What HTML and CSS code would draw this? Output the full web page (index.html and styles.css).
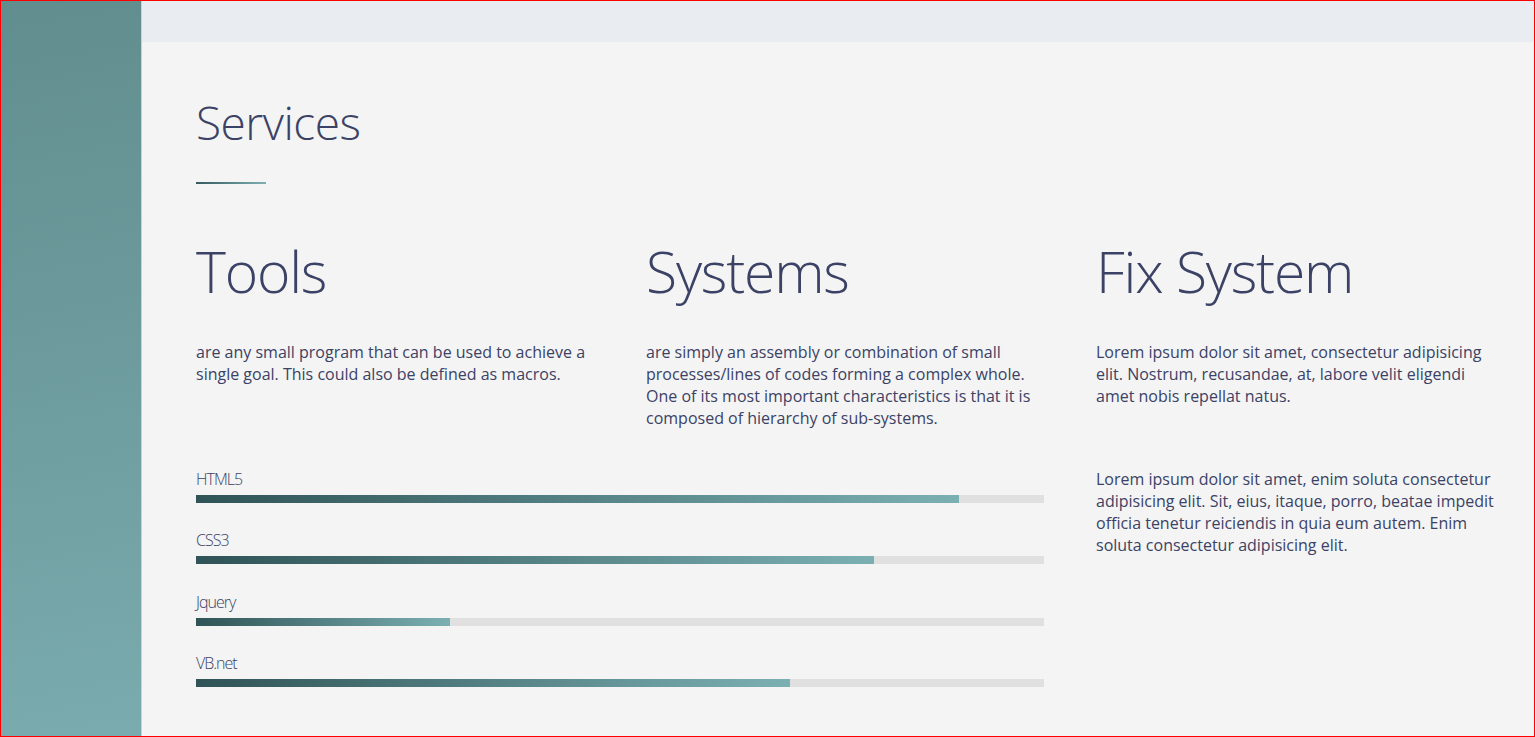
FILE: index.html
```html
<!DOCTYPE html>
<html lang="en">
<head>
<meta charset="utf-8">
<title>Services</title>
<link rel="stylesheet" href="styles.css">
</head>
<body>
<div class="page">
  <aside class="sidebar"></aside>
  <main class="main">
    <div class="topbar"></div>
    <section class="content">
      <h1 class="title">Services</h1>
      <div class="rule"></div>
      <div class="grid">
        <div class="col">
          <h2 class="col-title">Tools</h2>
          <p class="text">are any small program that can be used to achieve a single goal. This could also be defined as macros.</p>
        </div>
        <div class="col">
          <h2 class="col-title">Systems</h2>
          <p class="text">are simply an assembly or combination of small processes/lines of codes forming a complex whole. One of its most important characteristics is that it is composed of hierarchy of sub-systems.</p>
        </div>
        <div class="col">
          <h2 class="col-title">Fix System</h2>
          <p class="text">Lorem ipsum dolor sit amet, consectetur adipisicing elit. Nostrum, recusandae, at, labore velit eligendi amet nobis repellat natus.</p>
        </div>
        <div class="skills">
          <div class="skill">
            <div class="skill-label">HTML5</div>
            <div class="track"><div class="fill" style="width:90%"></div></div>
          </div>
          <div class="skill">
            <div class="skill-label">CSS3</div>
            <div class="track"><div class="fill" style="width:80%"></div></div>
          </div>
          <div class="skill">
            <div class="skill-label">Jquery</div>
            <div class="track"><div class="fill" style="width:30%"></div></div>
          </div>
          <div class="skill">
            <div class="skill-label">VB.net</div>
            <div class="track"><div class="fill" style="width:70%"></div></div>
          </div>
        </div>
        <div class="col">
          <p class="text">Lorem ipsum dolor sit amet, enim soluta consectetur adipisicing elit. Sit, eius, itaque, porro, beatae impedit officia tenetur reiciendis in quia eum autem. Enim soluta consectetur adipisicing elit.</p>
        </div>
      </div>
    </section>
  </main>
</div>
</body>
</html>
```

FILE: styles.css
```css
html, body {
  margin: 0;
  padding: 0;
}

body {
  font-family: "Open Sans", "Noto Sans", sans-serif;
  color: #3b4265;
  background: #f4f4f4;
}

.page {
  box-sizing: border-box;
  height: 737px;
  border: 1px solid #ff0000;
  display: flex;
  overflow: hidden;
}

.sidebar {
  width: 140px;
  flex: none;
  border-right: 1px solid #c3d4d6;
  background: linear-gradient(170deg, #618d8e 0%, #7aabae 100%);
}

.main {
  flex: 1;
  display: flex;
  flex-direction: column;
  background: #f4f4f4;
}

.topbar {
  height: 41px;
  flex: none;
  background: #e9ecf1;
}

.content {
  padding: 52px 0 0 54px;
}

.title {
  margin: 0;
  font-weight: 300;
  font-size: 46px;
  line-height: 56px;
  letter-spacing: -0.5px;
  color: #3b4265;
}

.rule {
  width: 70px;
  height: 2px;
  margin-top: 32px;
  background: linear-gradient(90deg, #355a5d, #7db0b3);
}

.grid {
  margin-top: 51px;
  display: grid;
  grid-template-columns: repeat(3, 398px);
  column-gap: 52px;
  row-gap: 39px;
}

.col-title {
  margin: 0 0 34px;
  font-weight: 300;
  font-size: 57px;
  line-height: 72px;
  letter-spacing: -1.2px;
  color: #3b4265;
}

.text {
  margin: 0;
  font-size: 16px;
  line-height: 22px;
  font-weight: 400;
  color: #3b4265;
}

.skills {
  grid-column: 1 / span 2;
  margin-top: 1px;
  display: flex;
  flex-direction: column;
  gap: 27.4px;
}

.skill-label {
  font-weight: 300;
  font-size: 16px;
  line-height: 20px;
  letter-spacing: -1px;
  margin-bottom: 6px;
  color: #3b4265;
}

.track {
  height: 8px;
  background: #e0e0e0;
}

.fill {
  height: 100%;
  background: linear-gradient(90deg, #2f5356 0%, #7bb0b3 100%);
}
```
